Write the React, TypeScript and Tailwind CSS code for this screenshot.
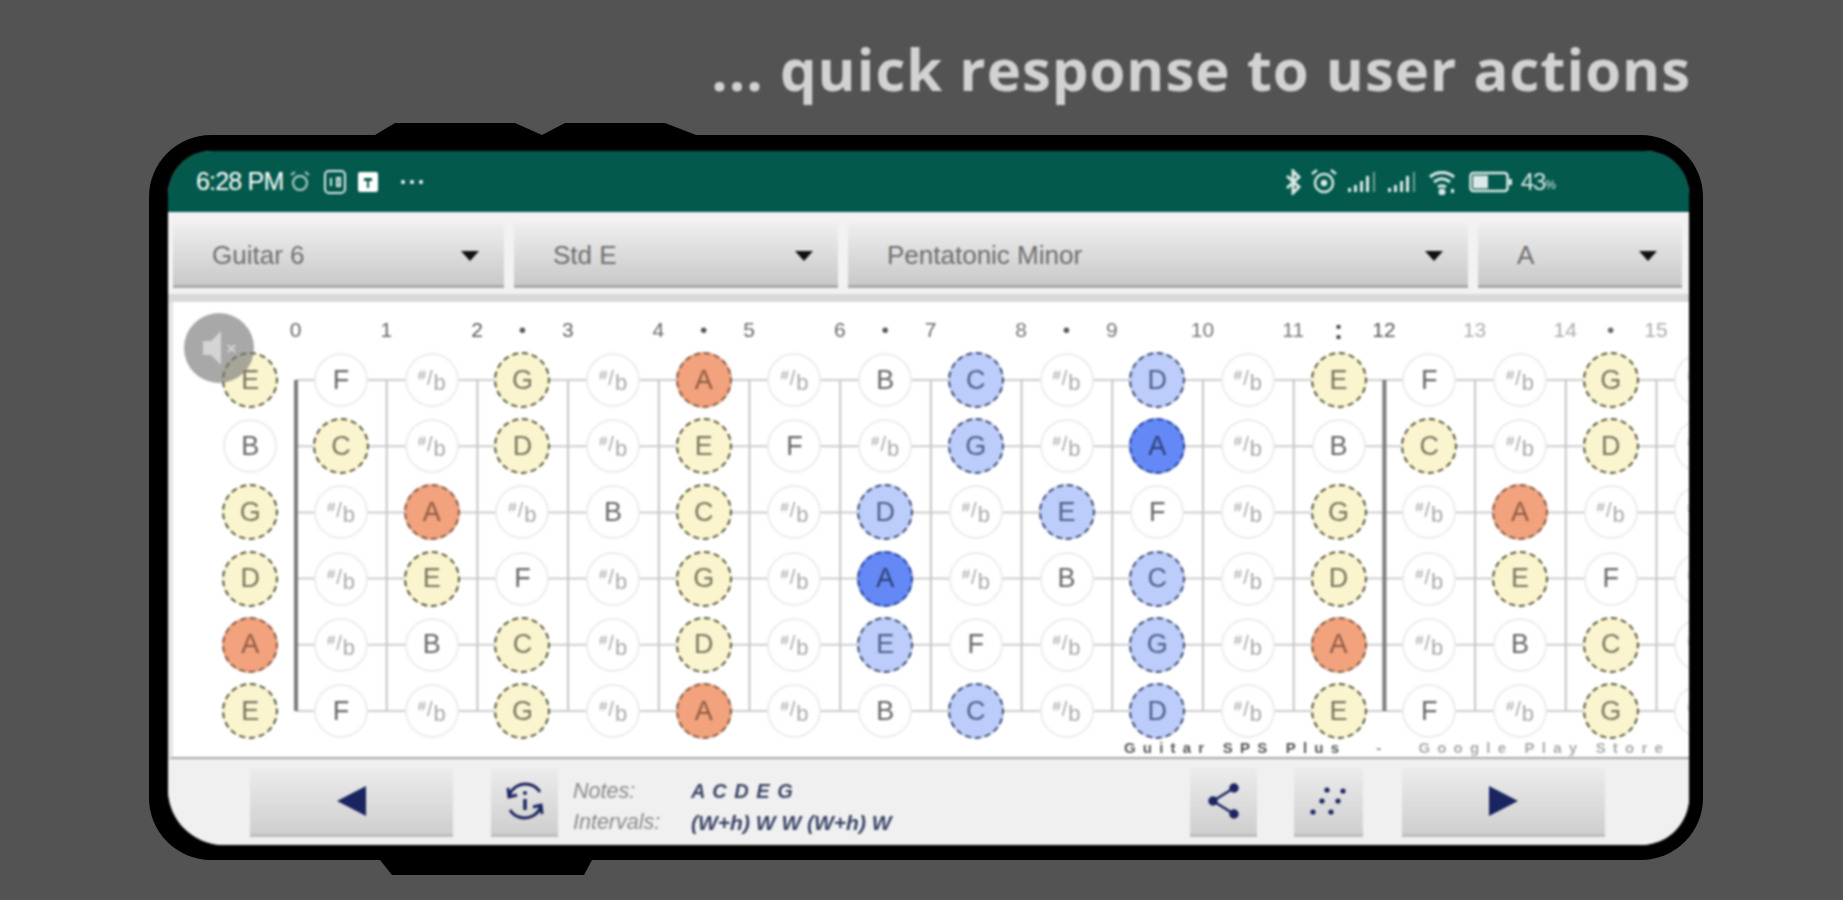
import React from "react";

type Kind = "c" | "o" | "b" | "s" | "n" | "x";
type N = [string, Kind];

const E_ROW: N[] = [["E","c"],["F","n"],["","x"],["G","c"],["","x"],["A","o"],["","x"],["B","n"],["C","b"],["","x"],["D","b"],["","x"],["E","c"],["F","n"],["","x"],["G","c"],["","x"]];
const ROWS: N[][] = [
  E_ROW,
  [["B","n"],["C","c"],["","x"],["D","c"],["","x"],["E","c"],["F","n"],["","x"],["G","b"],["","x"],["A","s"],["","x"],["B","n"],["C","c"],["","x"],["D","c"],["","x"]],
  [["G","c"],["","x"],["A","o"],["","x"],["B","n"],["C","c"],["","x"],["D","b"],["","x"],["E","b"],["F","n"],["","x"],["G","c"],["","x"],["A","o"],["","x"],["","x"]],
  [["D","c"],["","x"],["E","c"],["F","n"],["","x"],["G","c"],["","x"],["A","s"],["","x"],["B","n"],["C","b"],["","x"],["D","c"],["","x"],["E","c"],["F","n"],["","x"]],
  [["A","o"],["","x"],["B","n"],["C","c"],["","x"],["D","c"],["","x"],["E","b"],["F","n"],["","x"],["G","b"],["","x"],["A","o"],["","x"],["B","n"],["C","c"],["","x"]],
  E_ROW,
];

const KIND: Record<Kind, string> = {
  c: "w-[56px] h-[56px] bg-[#fbf5cf] border-2 border-dashed border-[#55553f] text-[#77745f]",
  o: "w-[56px] h-[56px] bg-[#f2a27c] border-2 border-dashed border-[#7a5a48] text-[#8b5a44]",
  b: "w-[56px] h-[56px] bg-[#bdcdfb] border-2 border-dashed border-[#3e4a68] text-[#4d5f88]",
  s: "w-[56px] h-[56px] bg-[#6488f5] border-2 border-dashed border-[#24408f] text-[#2c3e70]",
  n: "w-[54px] h-[54px] bg-white border-2 border-[#ececec] text-[#666666]",
  x: "w-[54px] h-[54px] bg-white border-2 border-[#ececec] text-[#a8a8a8]",
};

function Note({ n }: { n: N }) {
  return (
    <div className="flex items-center justify-center">
      <div className={`flex items-center justify-center rounded-full text-[27px] leading-none ${KIND[n[1]]}`}>
        {n[1] === "x" ? (
          <span className="flex items-start leading-none">
            <span className="text-[15px] mt-[1px]">#</span>
            <span className="text-[20px] mt-[2px] mx-[1px]">/</span>
            <span className="text-[22px] mt-[6px]">b</span>
          </span>
        ) : (
          n[0]
        )}
      </div>
    </div>
  );
}

const LABELS: [string, string][] = [
  ["0","text-[#666]"],["",""],["1","text-[#666]"],["",""],["2","text-[#555]"],["•","text-[#555]"],["3","text-[#666]"],["",""],
  ["4","text-[#666]"],["•","text-[#555]"],["5","text-[#666]"],["",""],["6","text-[#666]"],["•","text-[#555]"],["7","text-[#666]"],["",""],
  ["8","text-[#777]"],["•","text-[#555]"],["9","text-[#777]"],["",""],["10","text-[#777]"],["",""],["11","text-[#777]"],[":","text-[#444] font-bold text-[27px]"],
  ["12","text-[#555]"],["",""],["13","text-[#b0b0b0]"],["",""],["14","text-[#aaa]"],["•","text-[#666]"],["15","text-[#aaa]"],
];

function FretLines() {
  const frets = Array.from({ length: 16 }, (_, i) => 123 + 90.7 * i);
  const rows = [78, 144.2, 210.4, 276.6, 342.8, 409];
  return (
    <svg className="absolute inset-0" width="1516" height="455">
      {rows.map((y) => (
        <line key={y} x1="123" x2="1516" y1={y} y2={y} stroke="#cdcdcd" strokeWidth="2" />
      ))}
      {frets.map((x, i) => (
        <line key={x} x1={x} x2={x} y1="78" y2="409" stroke={i === 0 || i === 12 ? "#7c7c7c" : "#c6c6c6"} strokeWidth={i === 0 || i === 12 ? 4 : 2} />
      ))}
    </svg>
  );
}

function Dropdown({ label, w }: { label: string; w: string }) {
  return (
    <div className={`${w} h-[65px] pt-[3px] flex items-center justify-between pl-[39px] pr-[25px] bg-gradient-to-b from-[#efefef] to-[#c9c9c9] border-b-[3px] border-[#a9a9a9] text-[26px] text-[#6e6e6e]`}>
      <span>{label}</span>
      <svg width="18" height="10"><path d="M0 0H18L9 10Z" fill="#111" /></svg>
    </div>
  );
}

const BTN = "h-[69px] flex items-center justify-center bg-gradient-to-b from-[#ececec] to-[#cfcfcf] border-b-[3px] border-[#bdbdbd]";
const INK = "#1a2460";

function StatusIcons() {
  const bars = (
    <svg width="30" height="22" viewBox="0 0 30 22" fill="#dce9e6">
      <rect x="0" y="17" width="3" height="4" /><rect x="6" y="14" width="3" height="7" /><rect x="12" y="10" width="3" height="11" /><rect x="18" y="5" width="3" height="16" /><rect x="25" y="1" width="2" height="20" opacity="0.5" />
    </svg>
  );
  return (
    <div className="flex items-center text-[#dce9e6]">
      <svg width="16" height="26" viewBox="0 0 16 26" fill="none" stroke="#dce9e6" strokeWidth="3" className="mr-[10px]"><path d="M2 7 14 18 8 24V2l6 6L2 19" /></svg>
      <svg width="26" height="28" viewBox="0 0 26 28" fill="none" stroke="#dce9e6" strokeWidth="2.5" className="mr-[11px]"><circle cx="13" cy="15" r="9" /><path d="M1 6 6 2M25 6 20 2" /><circle cx="13" cy="15" r="2" fill="#dce9e6" /></svg>
      <span className="mr-[10px] flex">{bars}</span>
      <span className="mr-[10px] flex">{bars}</span>
      <svg width="28" height="26" viewBox="0 0 28 26" fill="none" stroke="#dce9e6" strokeWidth="3" className="mr-[13px]"><path d="M2 8c7-6 17-6 24 0M6 13c5-4 11-4 16 0M10 18c3-2 5-2 8 0" /><circle cx="14" cy="23" r="2" fill="#dce9e6" /><rect x="23" y="20" width="3" height="4" fill="#dce9e6" stroke="none" /></svg>
      <svg width="44" height="24" viewBox="0 0 44 24" fill="none" className="mr-[8px]"><rect x="1.5" y="3" width="37" height="18" rx="3" stroke="#dce9e6" strokeWidth="2.5" /><rect x="4" y="5.5" width="15" height="13" fill="#dce9e6" /><rect x="40" y="9" width="3" height="6" fill="#dce9e6" /></svg>
      <span className="text-[24px] tracking-[-1px]">43</span>
      <span className="text-[12px] mt-[6px]">%</span>
    </div>
  );
}

export default function App() {
  return (
    <div className="w-full h-[900px] bg-[#535353] overflow-hidden font-['Liberation_Sans',Arial,sans-serif]">
      <div className="h-[123px] flex justify-end items-start pt-[34px] pr-[152px] blur-[1px]">
        <h1 className="text-[58px] leading-[70px] font-bold tracking-[1px] text-[#d2d2d2] font-['Open_Sans',sans-serif] whitespace-nowrap">... quick response to user actions</h1>
      </div>

      <div className="relative ml-[149px] w-[1554px]">
        <svg className="block" width="340" height="12" viewBox="0 0 340 12" style={{ marginLeft: 226 }}>
          <path d="M0 12 20 0H140L167 12 190 0H290L321 12Z" fill="#000" />
        </svg>
        <div className="h-[725px] bg-black rounded-[62px] pl-[19px] pr-[14px] pt-[16px] pb-[15px]">
          <div className="h-[694px] rounded-tl-[44px] rounded-tr-[44px] rounded-bl-[56px] rounded-br-[48px] overflow-hidden flex flex-col bg-[#f0f0f0] blur-[0.9px]">
            {/* status bar */}
            <div className="h-[61px] shrink-0 bg-[#02594c] flex items-center justify-between pl-[28px] pr-[133px] text-white">
              <div className="flex items-center">
                <span className="text-[25px] tracking-[-0.8px] mr-[6px]">6:28 PM</span>
                <svg width="20" height="22" viewBox="0 0 20 22" fill="none" stroke="#b9d2cc" strokeWidth="2" className="mr-[13px]"><circle cx="10" cy="12" r="7" /><path d="M1 4l4-3M19 4l-4-3" /></svg>
                <svg width="24" height="26" viewBox="0 0 24 26" fill="none" stroke="#dce9e6" strokeWidth="2" className="mr-[11px]"><rect x="2" y="2" width="20" height="22" rx="4" /><path d="M8 9v8M14 9h3v8h-3z" /></svg>
                <svg width="20" height="20" viewBox="0 0 20 20" className="mr-[23px]"><rect width="20" height="20" rx="2" fill="#fff" /><path d="M6 6h8v3H11v7H9V9H6z" fill="#02594c" /></svg>
                <span className="flex gap-[5px]">
                  <span className="w-[4px] h-[4px] rounded-full bg-white" />
                  <span className="w-[4px] h-[4px] rounded-full bg-white" />
                  <span className="w-[4px] h-[4px] rounded-full bg-white" />
                </span>
              </div>
              <StatusIcons />
            </div>

            {/* toolbar */}
            <div className="h-[90px] shrink-0 bg-[#f2f2f2] pt-[11px] pl-[5px] flex gap-[10px] items-start border-b-[8px] border-[#d9d9d9]">
              <Dropdown label="Guitar 6" w="w-[331px]" />
              <Dropdown label="Std E" w="w-[324px]" />
              <Dropdown label="Pentatonic Minor" w="w-[620px]" />
              <Dropdown label="A" w="w-[204px]" />
            </div>

            {/* fretboard */}
            <div className="relative h-[457px] shrink-0 bg-white border-l-[5px] border-b-[2px] border-l-[#e4e4e4] border-b-[#a6a6a6] overflow-hidden">
              <FretLines />
              <div className="relative pt-[14px] pl-[100px] h-[42px] grid grid-cols-[repeat(31,45.35px)] text-[21px] leading-[28px] text-center">
                {LABELS.map((l, i) => (
                  <span key={i} className={`whitespace-nowrap flex justify-center ${l[1]}`}>{l[0]}</span>
                ))}
              </div>
              <div className="relative mt-[3px] pl-[32px] grid grid-cols-[repeat(17,90.7px)] auto-rows-[66.2px]">
                {ROWS.flatMap((r, ri) => r.map((n, i) => <Note key={`${ri}-${i}`} n={n} />))}
              </div>
              <div className="relative -mt-[4px] pr-[19px] flex justify-end gap-[30px] text-[15px] leading-[16px] font-bold tracking-[7.2px] whitespace-nowrap">
                <span className="text-[#555]">Guitar SPS Plus</span>
                <span className="text-[#888]">-</span>
                <span className="text-[#aaa]">Google Play Store</span>
              </div>
              <div className="absolute left-[11px] top-[11px] w-[70px] h-[70px] rounded-full bg-[#7a7a7a]/65 flex items-center justify-center">
                <svg width="44" height="44" viewBox="0 0 44 44">
                  <path d="M6 15h8L24 5v34L14 29H6z" fill="#d4d4d4" />
                  <path d="M31 19l7 7M38 19l-7 7" stroke="#d4d4d4" strokeWidth="2" />
                </svg>
              </div>
            </div>

            {/* bottom bar */}
            <div className="flex-1 flex items-start pt-[9px] pl-[82px] bg-[#f0f0f0]">
              <div className={`${BTN} w-[203px] mr-[38px]`}>
                <svg width="29" height="30" viewBox="0 0 29 30"><path d="M29 0V30L0 15Z" fill={INK} /></svg>
              </div>
              <div className={`${BTN} w-[67px] mr-[15px]`}>
                <svg width="42" height="42" viewBox="0 0 42 42" fill="none" stroke={INK} strokeWidth="3">
                  <path d="M5 16C8 7 17 2 27 5c4 1 7 4 9 7" />
                  <path d="M37 26c-3 9-12 14-22 11-4-1-7-4-9-7" />
                  <path d="M4 8l1 9 8-2M38 34l-1-9-8 2" />
                  <path d="M21 19v11" strokeWidth="3.5" />
                  <circle cx="21" cy="13" r="2" fill={INK} stroke="none" />
                </svg>
              </div>
              <div className="grid grid-cols-[118px_auto] gap-y-[8px] pt-[12px] text-[21.5px] leading-[23px] italic whitespace-nowrap">
                <span className="text-[#8a8a8a]">Notes:</span>
                <span className="text-[#3a4466] text-[20px] font-bold tracking-[1px]">A C D E G</span>
                <span className="text-[#8a8a8a]">Intervals:</span>
                <span className="text-[#3a4466] text-[21px] font-bold">(W+h) W W (W+h) W</span>
              </div>
              <div className="flex-1" />
              <div className={`${BTN} w-[67px] mr-[37px]`}>
                <svg width="32" height="36" viewBox="0 0 32 36" fill={INK} stroke={INK} strokeWidth="2.5">
                  <path d="M26 5 5 18l21 13" fill="none" />
                  <circle cx="26" cy="5" r="3.5" /><circle cx="5" cy="18" r="3.5" /><circle cx="26" cy="31" r="3.5" />
                </svg>
              </div>
              <div className={`${BTN} w-[69px] mr-[39px]`}>
                <svg width="40" height="32" viewBox="-20 -16 40 32" fill={INK}>
                  {[[-2,-11],[14,-10],[-7,0],[9,0],[-16,11],[2,11]].map(([x,y]) => (
                    <circle key={`${x}${y}`} cx={x} cy={y} r="2.6" />
                  ))}
                </svg>
              </div>
              <div className={`${BTN} w-[203px] mr-[84px]`}>
                <svg width="29" height="30" viewBox="0 0 29 30"><path d="M0 0V30L29 15Z" fill={INK} /></svg>
              </div>
            </div>
          </div>
        </div>
        <svg className="block" width="212" height="15" viewBox="0 0 212 15" style={{ marginLeft: 231 }}>
          <path d="M0 0 12 15H204L212 0Z" fill="#000" />
        </svg>
      </div>
    </div>
  );
}
